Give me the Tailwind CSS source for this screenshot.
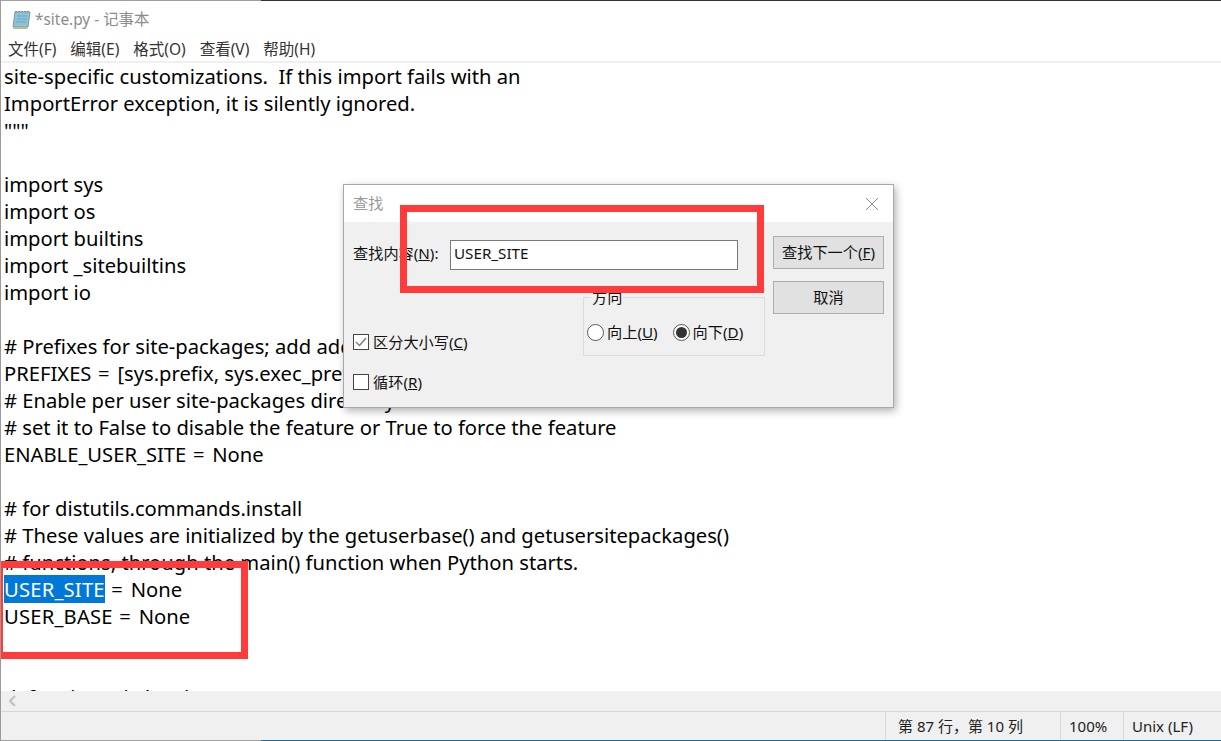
<!DOCTYPE html>
<html>
<head>
    <title>*site.py - 记事本</title>
    <meta charset="UTF-8">
    <script src="https://cdn.jsdelivr.net/npm/@tailwindcss/browser@4"></script>
</head>
<body class="bg-white">
<div class="relative w-[1221px] h-[741px] overflow-hidden flex flex-col border-l border-[#9a9a9a] font-['Noto_Sans','Noto_Sans_CJK_SC',sans-serif] text-black">
    <!-- desktop edge above the window -->
    <div class="h-[1px] shrink-0 flex">
        <div class="w-[260px] bg-[#a0a0a0]"></div>
        <div class="flex-1 bg-[#333]"></div>
    </div>
    <!-- title bar -->
    <div class="h-[37px] shrink-0 flex items-center pl-[10px] gap-[3px] text-[15.4px] text-[#8c8c8c]">
        <svg width="21" height="20" viewBox="0 0 21 20">
            <path d="M4 2h15l-2 15H2z" fill="#8fc4d8" stroke="#7a9aa8"/>
            <path d="M3 17h14l-1 2H2z" fill="#c9b78a"/>
            <path d="M5 2v-1M8 2v-1M11 2v-1M14 2v-1M17 2v-1" stroke="#555"/>
            <path d="M6 6h10M6 9h10M5 12h10" stroke="#6ba5bc"/>
        </svg>
        <span>*site.py - 记事本</span>
    </div>
    <!-- menu -->
    <div class="h-[25px] shrink-0 flex items-center pl-[7px] gap-[14px] text-[15.5px] text-[#333] border-b-2 border-[#f0f0f0]">
        <span>文件(F)</span><span>编辑(E)</span><span>格式(O)</span><span>查看(V)</span><span>帮助(H)</span>
    </div>
    <!-- editor -->
    <div class="flex-1 overflow-hidden pl-[3px] text-[20.2px] leading-[27px] whitespace-pre">site-specific customizations.  If this import fails with an
ImportError exception, it is silently ignored.
"""

import sys
import os
import builtins
import _sitebuiltins
import io

# Prefixes for site-packages; add additional prefixes like /usr/local here
PREFIXES<span class="tracking-[1.3px]"> = </span>[sys.prefix, sys.exec_prefix]
# Enable per user site-packages directory
# set it to False to disable the feature or True to force the feature
ENABLE_USER_SITE<span class="tracking-[1.3px]"> = </span>None

# for distutils.commands.install
# These values are initialized by the getuserbase() and getusersitepackages()
# functions, through the main() function when Python starts.
<span class="bg-[#0078d7] text-white tracking-[0.2px]">USER_SITE</span><span class="tracking-[1.3px]"> = </span>None
<span class="tracking-[0.2px]">USER_BASE</span><span class="tracking-[1.3px]"> = </span>None


def makepath(*paths):</div>
    <!-- horizontal scrollbar -->
    <div class="h-[21px] shrink-0 flex items-center pl-[6px] bg-[#f0f0f0] border-b border-[#d7d7d7]">
        <svg width="10" height="12" viewBox="0 0 10 12"><path d="M8 1L3 6l5 5" fill="none" stroke="#c0c0c0" stroke-width="2"/></svg>
    </div>
    <!-- status bar -->
    <div class="h-[28px] shrink-0 flex bg-[#f0f0f0] text-[15px] leading-[28px] text-[#222]">
        <div class="flex-1"></div>
        <div class="w-[175px] pl-[12px] border-l border-[#d7d7d7]">第 87 行，第 10 列</div>
        <div class="w-[63px] pl-[8px] border-l border-[#d7d7d7]">100%</div>
        <div class="w-[98px] pl-[8px] border-l border-[#d7d7d7]">Unix (LF)</div>
    </div>
    <!-- desktop edge below the window -->
    <div class="h-[1px] shrink-0 flex">
        <div class="w-[260px] bg-[#a0a0a0]"></div>
        <div class="flex-1 bg-[#1f6f9f]"></div>
    </div>

    <!-- find dialog -->
    <div class="absolute left-[342px] top-[184px] w-[551px] h-[224px] flex flex-col bg-[#f0f0f0] border border-[#a8a8a8] shadow-[2px_3px_8px_rgba(0,0,0,0.3)] text-[15.2px] text-[#111]">
        <div class="h-[37px] shrink-0 bg-white flex items-center justify-between pl-[9px] pr-[14px] text-[#999]">
            <span>查找</span>
            <svg width="14" height="14" viewBox="0 0 14 14"><path d="M1 1l12 12M13 1L1 13" stroke="#8c8c8c" stroke-width="1"/></svg>
        </div>
        <div class="flex-1 flex pl-[9px]">
            <div class="w-[420px] flex flex-col">
                <div class="flex items-center mt-[18px]">
                    <span class="w-[97px] pb-[3px]">查找内容(<u>N</u>):</span>
                    <div class="w-[288px] h-[30px] bg-white border border-[#7a7a7a] pl-[3px] leading-[24px]">USER_SITE</div>
                </div>
                <div class="flex-1 flex">
                    <div class="w-[230px] flex flex-col pt-[63px] gap-[22px]">
                        <label class="flex items-center gap-[4px] h-[18px]">
                            <span class="w-[16px] h-[16px] border border-[#444] bg-white flex items-center justify-center">
                                <svg width="12" height="10" viewBox="0 0 12 10"><path d="M1 5l3.5 3.5L11 1" fill="none" stroke="#777" stroke-width="1.3"/></svg>
                            </span>
                            <span>区分大小写(<u>C</u>)</span>
                        </label>
                        <label class="flex items-center gap-[4px] h-[18px]">
                            <span class="w-[16px] h-[16px] border border-[#444] bg-white"></span>
                            <span>循环(<u>R</u>)</span>
                        </label>
                    </div>
                    <div class="w-[182px] h-[59px] mt-[27px] border border-[#dcdcdc] relative flex items-center pl-[3px] gap-[15px]">
                        <span class="absolute left-[7px] top-[-10px] bg-[#f0f0f0] px-[1px] leading-[18px]">方向</span>
                        <label class="flex items-center gap-[3px] mt-[12px]">
                            <span class="w-[17px] h-[17px] rounded-full border border-[#555] bg-white"></span>
                            <span>向上(<u>U</u>)</span>
                        </label>
                        <label class="flex items-center gap-[3px] mt-[12px]">
                            <span class="w-[17px] h-[17px] rounded-full border border-[#555] bg-white flex items-center justify-center"><span class="w-[11px] h-[11px] rounded-full bg-[#333]"></span></span>
                            <span>向下(<u>D</u>)</span>
                        </label>
                    </div>
                </div>
            </div>
            <div class="w-[111px] flex flex-col gap-[12px] pt-[14px]">
                <div class="h-[33px] bg-[#e1e1e1] border border-[#adadad] flex items-center justify-center">查找下一个(<u>F</u>)</div>
                <div class="h-[33px] bg-[#e1e1e1] border border-[#adadad] flex items-center justify-center">取消</div>
            </div>
        </div>
    </div>

    <!-- red annotation boxes -->
    <div class="absolute left-[399px] top-[205px] w-[364px] h-[88px] border-[7px] border-[#ff3b3b]"></div>
    <div class="absolute left-[-5px] top-[561px] w-[252px] h-[98px] border-[7px] border-[#ff3b3b]"></div>
</div>
</body>
</html>
